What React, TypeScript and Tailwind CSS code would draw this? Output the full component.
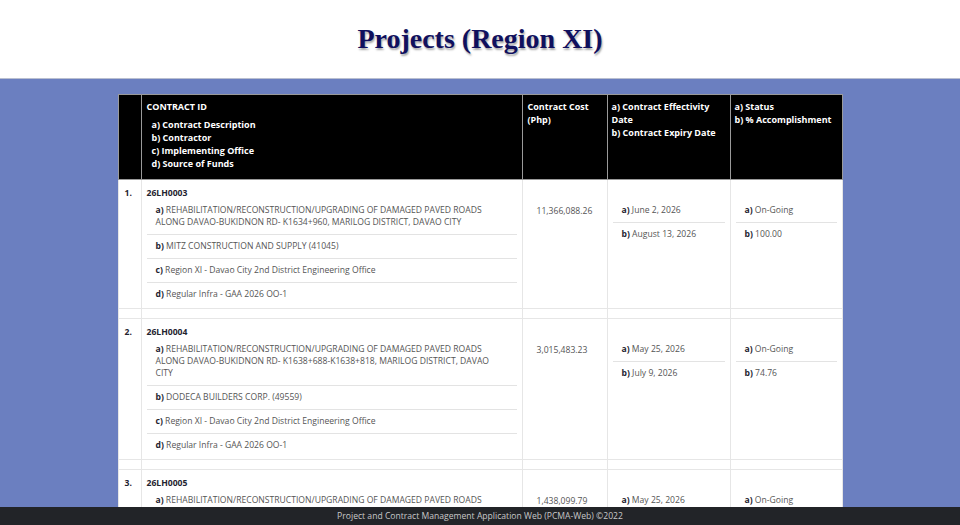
const rows = [
  {
    no: "1.",
    id: "26LH0003",
    desc: "REHABILITATION/RECONSTRUCTION/UPGRADING OF DAMAGED PAVED ROADS ALONG DAVAO-BUKIDNON RD- K1634+960, MARILOG DISTRICT, DAVAO CITY",
    contractor: "MITZ CONSTRUCTION AND SUPPLY (41045)",
    office: "Region XI - Davao City 2nd District Engineering Office",
    funds: "Regular Infra - GAA 2026 OO-1",
    cost: "11,366,088.26",
    start: "June 2, 2026",
    end: "August 13, 2026",
    status: "On-Going",
    pct: "100.00",
  },
  {
    no: "2.",
    id: "26LH0004",
    desc: "REHABILITATION/RECONSTRUCTION/UPGRADING OF DAMAGED PAVED ROADS ALONG DAVAO-BUKIDNON RD- K1638+688-K1638+818, MARILOG DISTRICT, DAVAO CITY",
    contractor: "DODECA BUILDERS CORP. (49559)",
    office: "Region XI - Davao City 2nd District Engineering Office",
    funds: "Regular Infra - GAA 2026 OO-1",
    cost: "3,015,483.23",
    start: "May 25, 2026",
    end: "July 9, 2026",
    status: "On-Going",
    pct: "74.76",
  },
  {
    no: "3.",
    id: "26LH0005",
    desc: "REHABILITATION/RECONSTRUCTION/UPGRADING OF DAMAGED PAVED ROADS ALONG DAVAO-BUKIDNON RD- K1639+100, MARILOG DISTRICT, DAVAO CITY",
    contractor: "DODECA BUILDERS CORP. (49559)",
    office: "Region XI - Davao City 2nd District Engineering Office",
    funds: "Regular Infra - GAA 2026 OO-1",
    cost: "1,438,099.79",
    start: "May 25, 2026",
    end: "July 9, 2026",
    status: "On-Going",
    pct: "50.00",
  },
];

function Item({ label, children, last }: { label: string; children: React.ReactNode; last?: boolean }) {
  return (
    <div className={`px-[9px] pt-[5px] pb-[6px] leading-[12px] ${last ? "" : "border-b border-[#e3e3e3]"}`}>
      <span className="font-bold text-[#1f2430]">{label}</span> <span className="text-[#555]">{children}</span>
    </div>
  );
}

export default function App() {
  return (
    <div className="h-[525px] flex flex-col overflow-hidden bg-[#6b7fc0] font-['Open_Sans',sans-serif]">
      <header className="h-[79px] shrink-0 bg-white border-b border-[#b9bfd0] flex items-center justify-center">
        <h1 className="text-[28px] font-bold text-[#10105e] font-['Liberation_Serif',serif] [text-shadow:1px_2px_2px_rgba(0,0,0,0.35)]">
          Projects (Region XI)
        </h1>
      </header>

      <main className="flex-1 overflow-hidden pt-[15px]">
        <table className="mx-auto w-[724px] table-fixed border-collapse bg-white text-[8.6px]">
          <colgroup>
            <col className="w-[23px]" />
            <col className="w-[381px]" />
            <col className="w-[85px]" />
            <col className="w-[123px]" />
            <col className="w-[112px]" />
          </colgroup>
          <thead>
            <tr className="bg-black text-white font-bold align-top h-[85px] leading-[13px] text-[9px]">
              <th className="border border-[#9a9a9a]" />
              <th className="border border-[#9a9a9a] text-left px-[5px] pt-[5px]">
                <div>CONTRACT ID</div>
                <div className="pl-[5px] pt-[5px]">
                  <div>a) Contract Description</div>
                  <div>b) Contractor</div>
                  <div>c) Implementing Office</div>
                  <div>d) Source of Funds</div>
                </div>
              </th>
              <th className="border border-[#9a9a9a] text-left px-[5px] pt-[5px]">
                Contract Cost
                <br />
                (Php)
              </th>
              <th className="border border-[#9a9a9a] text-left px-[4px] pt-[5px]">
                a) Contract Effectivity Date
                <br />
                b) Contract Expiry Date
              </th>
              <th className="border border-[#9a9a9a] text-left px-[4px] pt-[5px]">
                a) Status
                <br />
                b) % Accomplishment
              </th>
            </tr>
          </thead>
          <tbody>
            {rows.map((r, i) => (
              <>
                {i > 0 && (
                  <tr key={`gap${i}`} className="h-[10px]">
                    <td className="border border-[#e6e6e6]" />
                    <td className="border border-[#e6e6e6]" />
                    <td className="border border-[#e6e6e6]" />
                    <td className="border border-[#e6e6e6]" />
                    <td className="border border-[#e6e6e6]" />
                  </tr>
                )}
                <tr key={r.id} className="align-top">
                  <td className="border border-[#e6e6e6] pl-[6px] pt-[7px] font-bold text-[#1f2430] leading-[12px]">{r.no}</td>
                  <td className="border border-[#e6e6e6] px-[5px] pt-[7px] pb-[2px]">
                    <div className="font-bold text-[#1f2430] leading-[12px]">{r.id}</div>
                    <Item label="a)">{r.desc}</Item>
                    <Item label="b)">{r.contractor}</Item>
                    <Item label="c)">{r.office}</Item>
                    <Item label="d)" last>{r.funds}</Item>
                  </td>
                  <td className="border border-[#e6e6e6] pl-[14px] pt-[25px] text-[#555] leading-[12px]">{r.cost}</td>
                  <td className="border border-[#e6e6e6] px-[5px] pt-[19px]">
                    <Item label="a)">{r.start}</Item>
                    <Item label="b)" last>{r.end}</Item>
                  </td>
                  <td className="border border-[#e6e6e6] px-[5px] pt-[19px]">
                    <Item label="a)">{r.status}</Item>
                    <Item label="b)" last>{r.pct}</Item>
                  </td>
                </tr>
              </>
            ))}
          </tbody>
        </table>
      </main>

      <footer className="h-[18px] shrink-0 bg-[#222428] text-[#c8c8c8] text-[8.6px] flex items-center justify-center">
        Project and Contract Management Application Web (PCMA-Web) ©2022
      </footer>
    </div>
  );
}
